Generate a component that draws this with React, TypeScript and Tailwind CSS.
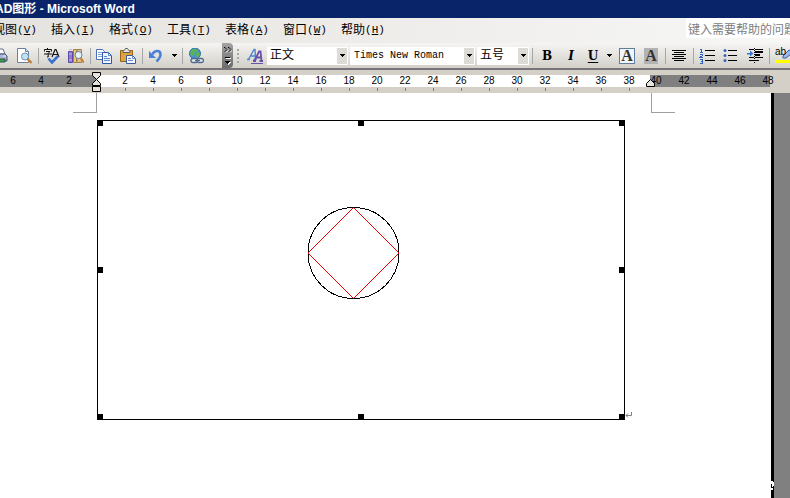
import React from 'react';

const menus = [
  { label: '视图', key: 'V' },
  { label: '插入', key: 'I' },
  { label: '格式', key: 'O' },
  { label: '工具', key: 'T' },
  { label: '表格', key: 'A' },
  { label: '窗口', key: 'W' },
  { label: '帮助', key: 'H' },
];

const leftNumbers = [6, 4, 2];
const bodyNumbers = [2, 4, 6, 8, 10, 12, 14, 16, 18, 20, 22, 24, 26, 28, 30, 32, 34, 36, 38];
const rightNumbers = [40, 42, 44, 46, 48];

const handles = [
  '-left-px -top-px',
  'left-1/2 -top-px -ml-[3px]',
  '-right-px -top-px',
  '-left-px top-1/2 -mt-[3px]',
  '-right-px top-1/2 -mt-[3px]',
  '-left-px -bottom-px',
  'left-1/2 -bottom-px -ml-[3px]',
  '-right-px -bottom-px',
];

const Icon = ({ children }: { children: React.ReactNode }) => (
  <svg viewBox="0 0 16 16" className="h-4 w-4 shrink-0" fill="none">
    {children}
  </svg>
);

const ToolButton = ({ label, children }: { label: string; children: React.ReactNode }) => (
  <button type="button" aria-label={label} className="flex h-6 w-6 shrink-0 items-center justify-center">
    {children}
  </button>
);

const Separator = () => (
  <span className="flex h-6 w-1 shrink-0 items-center justify-center">
    <span className="h-4 w-px bg-[#a6a6a6]" />
  </span>
);

const Arrow = () => (
  <svg viewBox="0 0 5 3" className="h-[3px] w-[5px]" shapeRendering="crispEdges">
    <path d="M0 0h5v1H4v1H3v1H2V2H1V1H0z" fill="#000" />
  </svg>
);

const ArrowButton = ({ label }: { label: string }) => (
  <button type="button" aria-label={label} className="flex h-6 w-3 shrink-0 items-center justify-center">
    <Arrow />
  </button>
);

const ComboBox = ({ label, value, className }: { label: string; value: string; className: string }) => (
  <div className={`relative h-[18px] shrink-0 bg-white ${className}`}>
    <select
      aria-label={label}
      defaultValue={value}
      className="block h-full w-full appearance-none bg-transparent pr-3 pl-[3px] leading-4 outline-none"
    >
      <option>{value}</option>
    </select>
    <span className="pointer-events-none absolute top-px right-px bottom-px flex w-[10px] items-center justify-center bg-[#dddbd6]">
      <Arrow />
    </span>
  </div>
);

const PrintIcon = () => (
  <Icon>
    <path d="M3 1h8l2 5H3z" fill="#fff" stroke="#5c6f96" />
    <path d="M1 6h12l2 2v5H1z" fill="#a9b7d4" stroke="#43506e" />
    <path d="M3 11h10v3H3z" fill="#38a838" stroke="#34495e" />
    <path d="M11 8h3" stroke="#e8eefb" />
  </Icon>
);

const PreviewIcon = () => (
  <Icon>
    <path d="M1.500 .5h8l3 3v11h-11z" fill="#fff" stroke="#6d7f9f" />
    <path d="M9.500.5v3h3" fill="#d5def0" stroke="#6d7f9f" />
    <circle cx="9" cy="8.500" r="3.500" fill="#bfe3f7" stroke="#6f8fae" />
    <path d="M11.500 11l4 4" stroke="#c77b32" strokeWidth="2.400" />
  </Icon>
);

const SpellIcon = () => (
  <Icon>
    <path d="M3.500 0v1.500M.5 3.500v-2h7v2M2 3.500h4l-2 2M0 6h8M4.200 5.500v3.500L3 9" stroke="#111" />
    <path d="M8 9l3-7.500h1L15 9M9 6.500h5" stroke="#111" strokeWidth="1.200" />
    <path d="M4.500 10.500l3.500 4 6-6.500" stroke="#3c6fd0" strokeWidth="2.600" />
  </Icon>
);

const ResearchIcon = () => (
  <Icon>
    <path d="M.5 3.500h4v11h-4z" fill="#8f7bd0" stroke="#5e4ba5" />
    <path d="M1 1.500h3M1 6h3M1 12h3" stroke="#c8b7f0" />
    <path d="M5.500 1.500h3v13h-3z" fill="#edc978" stroke="#a9803a" />
    <path d="M9 1.500h4.500v13H9z" fill="#dcc193" stroke="#a1814f" />
    <circle cx="10.500" cy="7" r="3.500" fill="#e2f3fb" stroke="#6685a8" />
    <path d="M12.500 10l3.500 4.500" stroke="#d2852f" strokeWidth="2.200" />
  </Icon>
);

const CopyIcon = () => (
  <Icon>
    <path d="M.5 1.500h6l2 2v8h-8z" fill="#fff" stroke="#4a6fb5" />
    <path d="M2 4.500h4M2 6.500h5M2 8.500h4" stroke="#7fa1dc" />
    <path d="M6.500 4.500h6l3 3v8h-9z" fill="#edf3ff" stroke="#2f57a6" />
    <path d="M12.500 4.500v3h3M8 8.500h3M8 10.500h6M8 12.500h6" stroke="#5d86cf" />
  </Icon>
);

const PasteIcon = () => (
  <Icon>
    <path d="M.5 2.500h12v11H.5z" fill="#e2a33a" stroke="#93641c" />
    <path d="M3 3.500c0-1.500 2-1 2.500-3h2c.5 2 2.500 1.500 2.500 3v1H3z" fill="#dfe3e8" stroke="#5d5d5d" />
    <path d="M6.500 7.500h6l3 3v5h-9z" fill="#f4f7ff" stroke="#3c5c9d" />
    <path d="M12.500 7.500v3h3M8 10.500h3M8 12.500h5" stroke="#6b8cca" />
  </Icon>
);

const UndoIcon = () => (
  <Icon>
    <path d="M1 3v7h7z" fill="#4a80d8" />
    <path d="M4.500 6.500C6 2.500 12 1.500 12.500 6c.3 3-1.500 5-4 7.500" stroke="#4a80d8" strokeWidth="2.600" />
  </Icon>
);

const LinkIcon = () => (
  <Icon>
    <circle cx="7" cy="5.500" r="5.500" fill="#4b91d4" stroke="#2f6f96" />
    <path d="M2 4l3-3 4 0 1 2-3 1.500-1 3L3 8zM8 5l3-1 1 2-2 4-2-2z" fill="#57b45a" />
    <rect x="3" y="10.500" width="7" height="4" rx="2" fill="#dfe8f2" stroke="#526a8a" strokeWidth="1.300" />
    <rect x="9" y="10.500" width="6.500" height="4" rx="2" fill="#dfe8f2" stroke="#526a8a" strokeWidth="1.300" />
    <path d="M7 12.500h5" stroke="#526a8a" strokeWidth="1.300" />
  </Icon>
);

const StylesIcon = () => (
  <Icon>
    <path d="M0 11.500h3M1.500 11.500L7 1.500h1l.5 10M6.500 11.500h3M4 8h4" stroke="#4f86cc" strokeWidth="1.400" />
    <path d="M6 13h3M7.500 13L12 3.500h1.500l1 9.500M12.500 13H16M9.500 9.500h4.500" stroke="#6950a8" strokeWidth="1.800" />
    <path d="M4 15.500h12" stroke="#6950a8" />
  </Icon>
);

const AlignIcon = () => (
  <Icon>
    <path
      d="M1 2.500h14M3 4.500h10M1 6.500h14M3 8.500h10M1 10.500h14M3 12.500h10"
      stroke="#000"
      shapeRendering="crispEdges"
    />
  </Icon>
);

const NumberingIcon = () => (
  <Icon>
    <path
      d="M2.500 1v3M1 1.500h2M1 4.500h3M1 6.500h2.500v1L1 9.500h3M1 11.500h2.500v3.500H1M1.500 13.500h2"
      stroke="#2f62b8"
      shapeRendering="crispEdges"
    />
    <path d="M6 2.500h10M6 7.500h10M6 12.500h10" stroke="#000" shapeRendering="crispEdges" />
  </Icon>
);

const BulletsIcon = () => (
  <Icon>
    <circle cx="2" cy="2.500" r="1.500" fill="#3566bc" />
    <circle cx="2" cy="7.500" r="1.500" fill="#3566bc" />
    <circle cx="2" cy="12.500" r="1.500" fill="#3566bc" />
    <path d="M5 2.500h9M5 7.500h9M5 12.500h9" stroke="#000" shapeRendering="crispEdges" />
  </Icon>
);

const IndentIcon = () => (
  <Icon>
    <path
      d="M2 1.500h5M8 1.500h8M2 9.500h5M8 9.500h8M2 12.500h5M8 12.500h4"
      stroke="#000"
      shapeRendering="crispEdges"
    />
    <path d="M8 4h8M8 7h5" stroke="#000" strokeWidth="2" shapeRendering="crispEdges" />
    <path d="M7.500 0v15" stroke="#000" strokeDasharray="1 1" shapeRendering="crispEdges" />
    <path d="M0 5h3V2.500L6.500 5.500 3 8.500V6.500H0z" fill="#3578cf" />
  </Icon>
);

const HighlightIcon = () => (
  <Icon>
    <path d="M0 12h16v3H0z" fill="#ffff00" />
    <path d="M8 8l6-6 2 1v3l-5 4H8z" fill="#9dbbe8" stroke="#375d9c" />
  </Icon>
);

const NumberCell = ({ value }: { value: number }) => (
  <span className="w-7 shrink-0 text-center">{value}</span>
);

const Toolbar = () => (
  <div className="flex h-[27px] items-center border-b-2 border-[#77757a] bg-linear-to-b from-[#f6f5f3] to-[#d3d0c9] font-['Liberation_Mono','Noto_Sans_CJK_SC',monospace] text-[10px]">
    <div className="-ml-3 flex items-center">
      <ToolButton label="打印"><PrintIcon /></ToolButton>
      <ToolButton label="打印预览"><PreviewIcon /></ToolButton>
      <Separator />
      <ToolButton label="拼写和语法"><SpellIcon /></ToolButton>
      <ToolButton label="信息检索"><ResearchIcon /></ToolButton>
      <Separator />
      <ToolButton label="复制"><CopyIcon /></ToolButton>
      <ToolButton label="粘贴"><PasteIcon /></ToolButton>
      <Separator />
      <ToolButton label="撤消"><UndoIcon /></ToolButton>
      <ArrowButton label="撤消列表" />
      <Separator />
      <ToolButton label="超链接"><LinkIcon /></ToolButton>
    </div>

    <button
      type="button"
      aria-label="工具栏选项"
      className="ml-[14px] flex h-full w-[11px] shrink-0 flex-col items-center justify-between rounded-r-sm bg-linear-to-b from-[#a3a3a3] to-[#6c6c6c] pt-1 pb-[3px]"
    >
      <svg viewBox="0 0 8 6" className="h-[6px] w-2" fill="none">
        <path d="M2 1.500l2 2-2 2M6 1.500l2 2-2 2" stroke="#fff" />
        <path d="M0 .5h1l2 2-2 2M4 .5h1l2 2-2 2" stroke="#000" />
      </svg>
      <svg viewBox="0 0 7 8" className="h-2 w-[7px]" shapeRendering="crispEdges">
        <path d="M2 1h5v1H2zM2 5h5v1H6v1H5v1H4V7H3V6H2z" fill="#fff" />
        <path d="M1 0h5v1H1zM1 4h5v1H5v1H4v1H3V6H2V5H1z" fill="#000" />
      </svg>
    </button>

    <div className="flex items-center">
      <span className="flex w-[10px] flex-col items-center gap-[2px]">
        <span className="h-[2px] w-[2px] bg-[#a9a7a3]" />
        <span className="h-[2px] w-[2px] bg-[#a9a7a3]" />
        <span className="h-[2px] w-[2px] bg-[#a9a7a3]" />
        <span className="h-[2px] w-[2px] bg-[#a9a7a3]" />
      </span>
      <ToolButton label="格式窗格"><StylesIcon /></ToolButton>
      <div className="flex gap-[2px]">
        <ComboBox label="样式" value="正文" className="w-[81px] text-xs" />
        <ComboBox label="字体" value="Times New Roman" className="w-[125px] pl-px" />
        <ComboBox label="字号" value="五号" className="w-[52px] text-xs" />
      </div>
      <span className="mx-px flex"><Separator /></span>
    </div>

    <div className="flex items-center font-['DejaVu_Serif',serif] text-xs font-bold">
      <ToolButton label="加粗">B</ToolButton>
      <ToolButton label="倾斜"><span className="italic">I</span></ToolButton>
      <button type="button" aria-label="下划线" className="h-6 w-5 shrink-0 underline underline-offset-2">
        U
      </button>
      <ArrowButton label="下划线样式" />
      <ToolButton label="字符边框">
        <span className="h-4 w-4 border border-[#5f7d9c] bg-[#f3f6f8] font-['Liberation_Serif',serif] text-base leading-[14px] text-[#333]">
          A
        </span>
      </ToolButton>
      <ToolButton label="字符底纹">
        <span className="h-4 w-[14px] bg-[#b2b2b2] font-['Liberation_Serif',serif] text-base leading-4 text-[#333]">
          A
        </span>
      </ToolButton>
      <Separator />
      <ToolButton label="居中"><AlignIcon /></ToolButton>
      <Separator />
      <ToolButton label="编号"><NumberingIcon /></ToolButton>
      <ToolButton label="项目符号"><BulletsIcon /></ToolButton>
      <ToolButton label="增加缩进量"><IndentIcon /></ToolButton>
      <Separator />
      <button type="button" aria-label="突出显示" className="relative flex h-6 w-6 shrink-0 items-center justify-center">
        <HighlightIcon />
        <span className="absolute top-0 left-1 font-['Liberation_Sans',sans-serif] text-[10px] leading-4 font-normal">
          ab
        </span>
      </button>
    </div>
  </div>
);

const Ruler = () => (
  <div className="relative bg-[#d4d0c8] pt-[5px] font-['Liberation_Sans',sans-serif] text-[10px] leading-3">
    <div className="flex">
      <div className="flex w-[97px] shrink-0 justify-end overflow-hidden bg-[#808080] pr-[14px]">
        {leftNumbers.map((n) => <NumberCell key={n} value={n} />)}
      </div>
      <div className="flex w-[553px] shrink-0 bg-white pl-[14px]">
        {bodyNumbers.map((n) => <NumberCell key={n} value={n} />)}
      </div>
      <div className="w-[120px] shrink-0 bg-[#808080]">
        <div className="-ml-2 flex">
          {rightNumbers.map((n) => <NumberCell key={n} value={n} />)}
        </div>
      </div>
    </div>
    <div className="flex h-[6px] pt-px pl-[111px]">
      {bodyNumbers.map((n) => (
        <span key={n} className="flex w-7 shrink-0 justify-center">
          <span className="h-[3px] w-px bg-[#808080]" />
        </span>
      ))}
    </div>

    {/* Indent markers */}
    <svg viewBox="0 0 9 21" className="absolute top-[2px] left-[92px] h-[21px] w-[9px]">
      <path
        d="M.5.5h8v3l-4 4-4-4zM4.500 7.500l4 4v2h-8v-2zM.5 14.500h8v5h-8z"
        fill="#e6e3dc"
        stroke="#000"
      />
    </svg>
    <svg viewBox="0 0 9 8" className="absolute top-[9px] left-[646px] h-2 w-[9px]">
      <path d="M.5 7.500v-3l4-4 4 4v3z" fill="#e6e3dc" stroke="#000" />
    </svg>
  </div>
);

const Page = () => (
  <main className="flex flex-1 bg-[#808080]">
    <div className="flex-1 bg-white">
      <div className="flex pl-[73px]">
        <span className="h-5 w-6 border-r border-b border-[#a0a0a0]" />
        <span className="ml-[554px] h-5 w-6 border-b border-l border-[#a0a0a0]" />
      </div>
      <div className="flex items-end pt-[7px] pl-[97px]">
        <div className="relative h-[300px] w-[528px] border border-black">
          <svg viewBox="0 0 526 298" className="block h-full w-full" fill="none" role="img" aria-label="CAD图形">
            <circle cx="255.500" cy="132" r="45.500" stroke="#000" shapeRendering="crispEdges" />
            <path d="M255.500 86.500l45.500 45.500-45.500 45.500L210 132z" stroke="#f00000" />
          </svg>
          {handles.map((place) => (
            <span key={place} className={`absolute h-[6px] w-[6px] bg-black ${place}`} />
          ))}
        </div>
        <svg viewBox="0 0 8 8" className="h-2 w-2" fill="none">
          <path d="M6.500 0v3.500H1M3 1.500l-2 2 2 2" stroke="#808080" />
        </svg>
      </div>
    </div>
    <div className="flex w-[19px] items-end border-l-[3px] border-black">
      <svg viewBox="0 0 3 10" className="-ml-[3px] mb-[7px] h-[10px] w-[3px]" shapeRendering="crispEdges">
        <path d="M0 0h2v1h1v4H2v1H1V3H0zM0 7h2v2H0z" fill="#fff" />
      </svg>
    </div>
  </main>
);

const App = () => {
  return (
    <div className="flex min-h-screen flex-col overflow-hidden bg-white text-black">
      <header className="h-[18px] bg-[#0a246a] font-['Liberation_Sans','Noto_Sans_CJK_SC',sans-serif] text-xs leading-[18px] font-bold whitespace-nowrap text-white">
        <h1 className="-ml-[5px]">AD图形 - Microsoft Word</h1>
      </header>

      <div className="flex h-[25px] items-start bg-linear-to-r from-[#e5e3df] to-[#f7f7f6]">
        <nav className="-ml-[14px] flex h-full items-center font-['Liberation_Mono','Noto_Sans_CJK_SC',monospace] text-[11px]">
          {menus.map((menu) => (
            <button key={menu.key} type="button" className="flex w-[58px] shrink-0 items-center justify-center whitespace-nowrap">
              <span className="text-xs">{menu.label}</span>
              <span>(<u>{menu.key}</u>)</span>
            </button>
          ))}
        </nav>
        <input
          type="text"
          aria-label="键入需要帮助的问题"
          placeholder="键入需要帮助的问题"
          className="-mr-2 ml-auto h-5 w-[112px] bg-white pl-[2px] font-['Noto_Sans_CJK_SC',sans-serif] text-xs outline-none placeholder:text-[#808080]"
        />
      </div>

      <Toolbar />
      <Ruler />
      <Page />
    </div>
  );
};

export default App;
